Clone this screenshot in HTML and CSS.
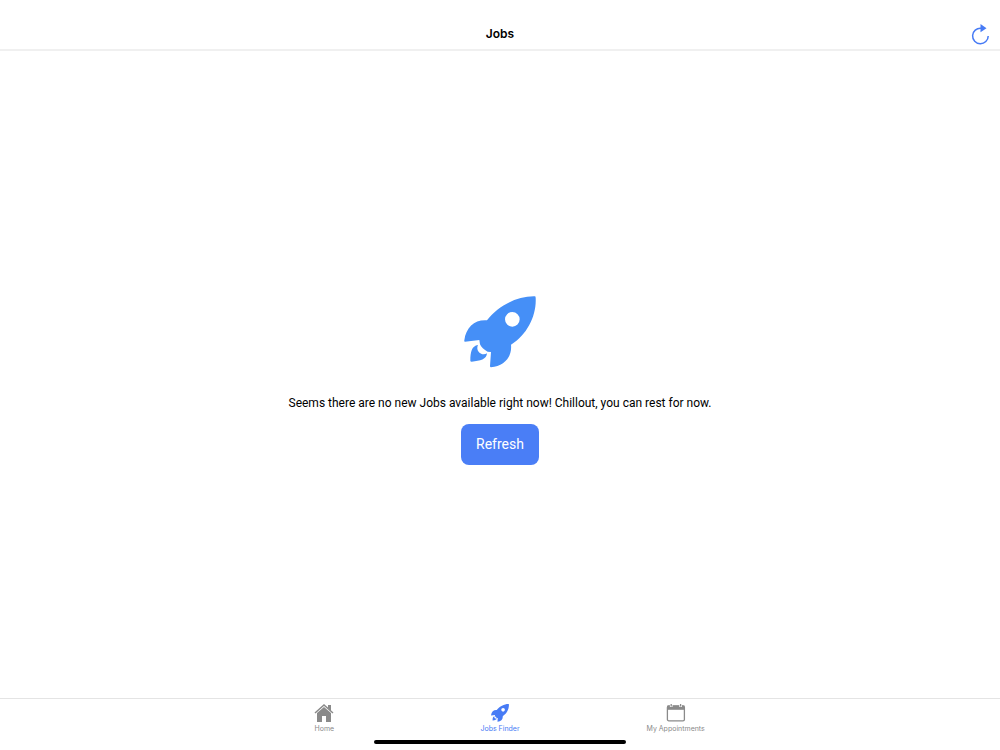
FILE: index.html
```html
<!DOCTYPE html>
<html lang="en">
<head>
  <meta charset="UTF-8" />
  <meta name="viewport" content="width=device-width, initial-scale=1.0"/>
  <title>Jobs</title>
  <link rel="stylesheet" href="styles.css">
</head>
<body>

<svg class="symbols" aria-hidden="true">
  <symbol id="rocket" viewBox="42 33 216 216">
    <path fill-rule="evenodd" d="M254 34 Q257 34 257 38 C260 91 232 149 183 179 C187 217 161 244 123 247 Q120 247 120 243 L123 201 L113 200 C102 195 93 186 90 178 L88 165 L45 170 Q42 170 43 166 C48 126 75 103 111 106 C145 62 201 33 254 34 Z M187 81 A22 22 0 1 0 187 125 A22 22 0 1 0 187 81 Z"/>
    <path d="M84 180 C65 183 61 201 61 227 Q61 230 65 230 C91 228 110 223 111 205 C97 215 75 199 84 180 Z"/>
  </symbol>
</svg>

<header class="navbar">
  <h1>Jobs</h1>
  <button type="button" class="reload-btn" aria-label="Reload">
    <svg viewBox="0 -1 20 22" width="20" height="22">
      <path d="M11 4.2 A7.8 7.8 0 1 0 18.2 12" fill="none" stroke="currentColor" stroke-width="1.5"/>
      <path d="M10.5 0 L16.5 4.2 L10.5 8.2 Z" fill="currentColor"/>
    </svg>
  </button>
</header>

<main class="empty-state">
  <svg class="rocket"><use href="#rocket"/></svg>
  <p>Seems there are no new Jobs available right now! Chillout, you can rest for now.</p>
  <button type="button" class="refresh-btn">Refresh</button>
</main>

<footer class="tabbar">
  <nav class="tabs">
    <a href="#home">
      <svg viewBox="0 0 20 20" width="20" height="20">
        <path d="M1 10 L10 2 L19 10" fill="none" stroke="currentColor" stroke-width="1.5"/>
        <path d="M14 2 H17 V8 L14 5 Z M10 4 L17 10 V19 H12 V13 H8 V19 H3 V10 Z" fill="currentColor"/>
      </svg>
      <span>Home</span>
    </a>
    <a href="#jobs" class="active">
      <svg class="tab-rocket"><use href="#rocket"/></svg>
      <span>Jobs Finder</span>
    </a>
    <a href="#appointments">
      <svg viewBox="0 0 20 20" width="20" height="20">
        <rect x="1.4" y="3" width="17" height="14.8" rx="1.4" fill="none" stroke="currentColor" stroke-width="1.3"/>
        <path d="M1.4 2.6 H18.4 V6.8 H1.4 Z" fill="currentColor"/>
        <path d="M5.2 1 V4 M14.6 1 V4" stroke="#fff" stroke-width="2.6"/>
        <path d="M5.2 1 V3.6 M14.6 1 V3.6" stroke="currentColor" stroke-width="1.3"/>
      </svg>
      <span>My Appointments</span>
    </a>
  </nav>
  <div class="home-indicator"></div>
</footer>

</body>
</html>
```
FILE: styles.css
```css
* { box-sizing: border-box; }

body {
  font-family: Roboto, Arial, sans-serif;
  margin: 0;
  min-height: 100vh;
  display: flex;
  flex-direction: column;
  background: #fff;
  color: #000;
}

.symbols {
  display: none;
}

button {
  border: none;
  cursor: pointer;
  font-family: inherit;
}

.navbar {
  display: grid;
  grid-template-columns: 1fr auto 1fr;
  align-items: center;
  padding: 20px 10px 1px;
  height: 51px;
  border-bottom: 2px solid #f0f0f0;
}

.navbar h1 {
  grid-column: 2;
  margin: 0;
  font-family: Inter, Arial, sans-serif;
  font-size: 12px;
  line-height: 16px;
  font-weight: 600;
}

.reload-btn {
  justify-self: end;
  padding: 0;
  height: 22px;
  background: none;
  color: #477bf5;
}

.reload-btn svg {
  display: block;
}

.empty-state {
  flex: 1;
  display: flex;
  flex-direction: column;
  align-items: center;
  justify-content: center;
  padding-top: 12px;
}

.rocket {
  width: 72px;
  height: 72px;
  fill: #458ff7;
}

.empty-state p {
  margin: 26px 0 12px;
  font-size: 12px;
  line-height: 18px;
  text-align: center;
}

.refresh-btn {
  padding: 10px 15px;
  background: #4a7ef6;
  color: #fff;
  border-radius: 8px;
  font-size: 14px;
  line-height: 21px;
}

.tabbar {
  display: flex;
  flex-direction: column;
  align-items: center;
  height: 52px;
  border-top: 1px solid #e4e4e4;
}

.tabs {
  display: grid;
  grid-template-columns: repeat(3, 1fr);
  width: 100%;
  max-width: 527px;
  padding-top: 4px;
}

.tabs a {
  display: flex;
  flex-direction: column;
  align-items: center;
  color: #8a8a8a;
  font-family: Inter, Arial, sans-serif;
  font-size: 7px;
  line-height: 12px;
  text-decoration: none;
}

.tabs .active {
  color: #477bf5;
}

.tab-rocket {
  width: 18px;
  height: 18px;
  margin: 1px;
  fill: currentColor;
}

.home-indicator {
  width: 252px;
  height: 4px;
  margin-top: 5px;
  border-radius: 2px;
  background: #000;
}
```
